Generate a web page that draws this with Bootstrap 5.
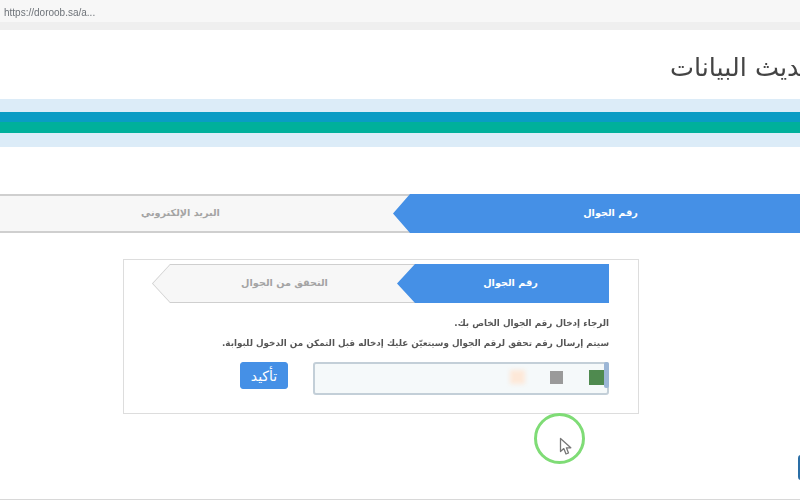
<!DOCTYPE html>
<html lang="ar" dir="rtl">
<head>
    <meta charset="UTF-8">
    <title>تحديث البيانات</title>
    <link href="https://cdn.jsdelivr.net/npm/bootstrap@5.3.0/dist/css/bootstrap.min.css" rel="stylesheet">
    <style>
        html, body { height: 500px; overflow: hidden; }
        body { font-family: "DejaVu Sans", "Noto Sans", sans-serif; background: #fff; position: relative; border-bottom: 1px solid #d8d8d8; }
        .url-bar { height: 22px; background: #f7f7f7; color: #6d7278; font: 10px "Liberation Sans", sans-serif; padding: 3px 4px 0; filter: blur(.4px); }
        .url-strip { height: 8px; background: #efefef; }
        .page-title { font-size: 25.5px; font-weight: 400; line-height: 34px; color: #444; margin: 20px -24px 15px 0; white-space: nowrap; filter: blur(.4px); }
        .color-band { height: 48px; background: #dcecf8; padding-top: 13px; }
        .band-top { height: 10px; background: #0a9cc4; }
        .band-bottom { height: 11px; background: #00b09b; }
        .step-row { display: flex; margin-top: 47px; height: 39px; }
        .step-item { display: flex; align-items: center; justify-content: center; font-weight: 700; position: relative; }
        .step-on { background: #4590e6; color: #fff; z-index: 1; }
        .step-off { color: #a4a4a4; background: #cfcfcf; }
        .step-off > span { position: relative; }
        .step-off::before { content: ""; position: absolute; inset: 2px 0; background: #f7f7f7; }
        .big-steps .step-item { font-size: 9.7px; }
        .big-steps .step-on { width: 407px; padding-left: 28px; clip-path: polygon(0 0, 100% 0, 100% 100%, 17px 100%, 0 50%, 17px 0); }
        .big-steps .step-off { flex: 1; margin-right: -17px; padding-right: 49px; }
        .form-box { width: 516px; height: 155px; margin: 26px 161px 0 0; border: 1px solid #ddd; padding: 4px 29px 0 28px; }
        .form-box .step-row { margin-top: 0; }
        .form-box .step-item { font-size: 9.7px; }
        .form-box .step-on { width: 212px; padding-left: 15px; clip-path: polygon(0 0, 100% 0, 100% 100%, 18px 100%, 0 50%, 18px 0); }
        .form-box .step-off { width: 263px; margin-right: -18px; padding-left: 2px; clip-path: polygon(0 50%, 18px 0, 100% 0, 100% 100%, 18px 100%); }
        .form-box .step-off::before { inset: 1px 0 1px 0; clip-path: polygon(1px 50%, 18px 0, 100% 0, 100% 100%, 18px 100%); }
        .help-text { font-size: 8.78px; font-weight: 700; color: #555; line-height: 20px; white-space: nowrap; filter: blur(.3px); }
        .help-first { margin-top: 10px; }
        .input-line { margin-top: 9px; }
        .phone-wrap { width: 296px; height: 33px; position: relative; }
        .phone-input { height: 33px; border: 2px solid #c3cfd8; border-radius: 3px; background: #f5f9fa; }
        .mask-spot { position: absolute; filter: blur(.6px); }
        .spot-handle { right: 0; top: 0; width: 5px; height: 26px; background: #9cb6d6; border-radius: 2px; }
        .spot-green { right: 5px; top: 8px; width: 15px; height: 15px; background: #4f8a4f; }
        .spot-gray { right: 46px; top: 9px; width: 13px; height: 13px; background: #9a9a9a; }
        .spot-peach { right: 84px; top: 8px; width: 15px; height: 14px; background: #fde8d8; filter: blur(2px); }
        .btn-confirm { width: 48px; height: 27px; padding: 0; margin-right: 25px; font-size: 14px; line-height: 1; background: #4590e6; border-color: #4590e6; border-radius: 3px; color: #fff; }
        .click-ring { position: absolute; left: 534px; top: 413px; width: 51px; height: 51px; border: 3px solid #7fdc76; border-radius: 50%; filter: blur(.4px); }
        .click-arrow { position: absolute; left: 559px; top: 437px; filter: blur(.3px); }
        .edge-tab { position: absolute; left: 798px; top: 455px; width: 6px; height: 25px; background: #2a6ea6; border-radius: 3px; }
    </style>
</head>
<body>

<div class="url-bar d-flex align-items-center" dir="ltr">https://doroob.sa/a...</div>
<div class="url-strip"></div>

<h1 class="page-title">تحديث البيانات</h1>

<div class="color-band">
    <div class="band-top"></div>
    <div class="band-bottom"></div>
</div>

<div class="step-row big-steps">
    <div class="step-item step-on"><span>رقم الجوال</span></div>
    <div class="step-item step-off"><span>البريد الإلكتروني</span></div>
</div>

<div class="form-box">
    <div class="step-row">
        <div class="step-item step-on"><span>رقم الجوال</span></div>
        <div class="step-item step-off"><span>التحقق من الجوال</span></div>
    </div>
    <div class="help-text help-first">الرجاء إدخال رقم الجوال الخاص بك.</div>
    <div class="help-text">سيتم إرسال رقم تحقق لرقم الجوال وسيتعيّن عليك إدخاله قبل التمكن من الدخول للبوابة.</div>
    <div class="input-line d-flex align-items-start">
        <div class="phone-wrap">
            <input type="text" class="form-control phone-input">
            <span class="mask-spot spot-handle"></span>
            <span class="mask-spot spot-green"></span>
            <span class="mask-spot spot-gray"></span>
            <span class="mask-spot spot-peach"></span>
        </div>
        <button type="button" class="btn btn-primary btn-confirm">تأكيد</button>
    </div>
</div>

<div class="click-ring"></div>
<svg class="click-arrow" width="13" height="19" viewBox="0 0 13 19"><path d="M1.5 1.5V14.5L4.8 11.6L7 17L9.5 16L7.4 10.8H11.8Z" fill="#fff" stroke="#777" stroke-width="1.3" stroke-linejoin="round"/></svg>
<div class="edge-tab"></div>

<script src="https://cdn.jsdelivr.net/npm/bootstrap@5.3.0/dist/js/bootstrap.bundle.min.js"></script>
</body>
</html>
